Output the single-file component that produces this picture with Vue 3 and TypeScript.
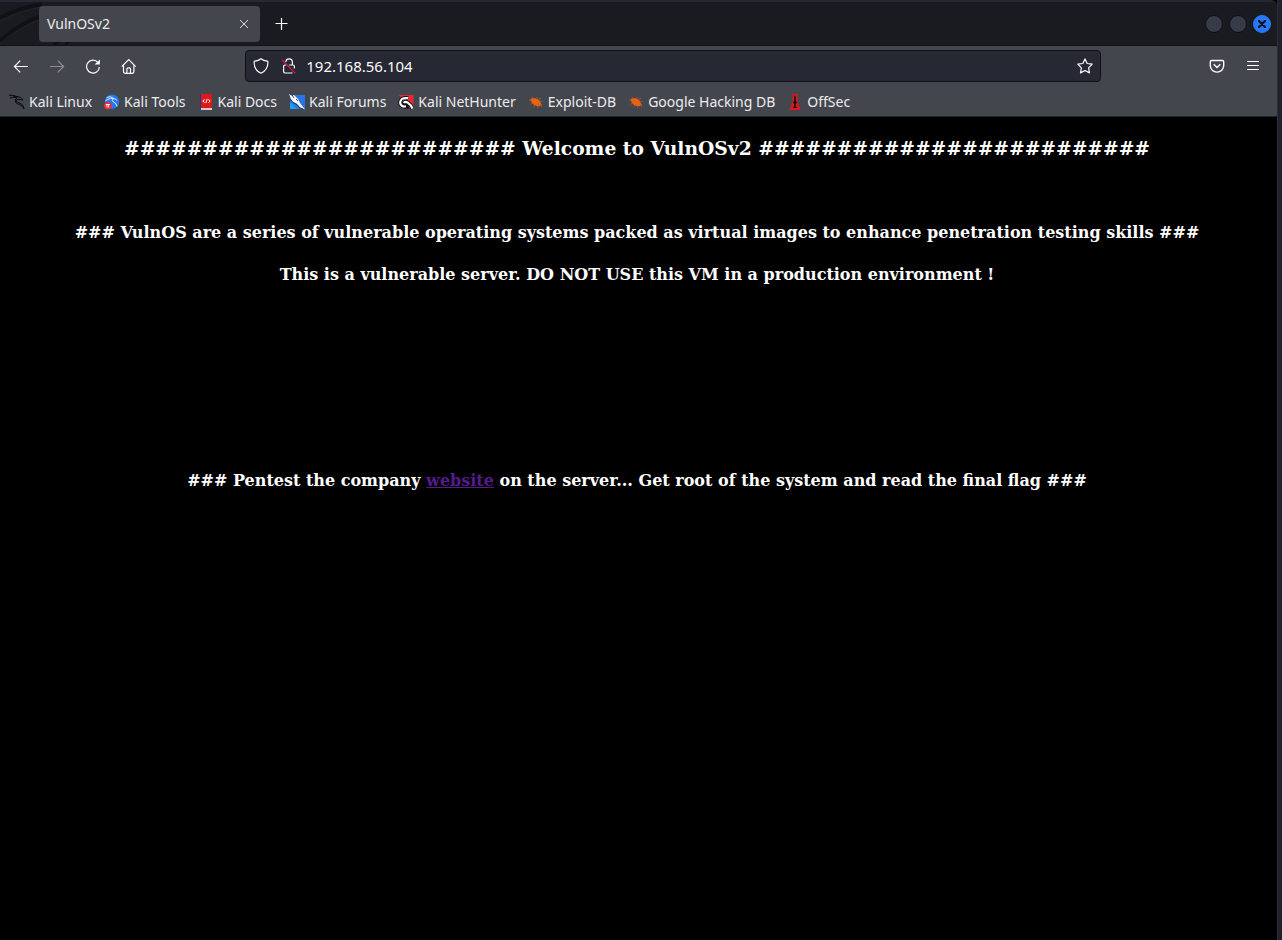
<script setup lang="ts">
import { ref } from 'vue'

interface Bookmark {
  label: string
  icon: 'dragon' | 'tools' | 'docs' | 'forums' | 'hunter' | 'bug' | 'offsec'
}

const address = ref('192.168.56.104')

const bookmarks: Bookmark[] = [
  { label: 'Kali Linux', icon: 'dragon' },
  { label: 'Kali Tools', icon: 'tools' },
  { label: 'Kali Docs', icon: 'docs' },
  { label: 'Kali Forums', icon: 'forums' },
  { label: 'Kali NetHunter', icon: 'hunter' },
  { label: 'Exploit-DB', icon: 'bug' },
  { label: 'Google Hacking DB', icon: 'bug' },
  { label: 'OffSec', icon: 'offsec' },
]

const hashes = '#'.repeat(25)
</script>

<template>
  <div class="desktop">
    <div class="window">
      <header class="titlebar">
        <svg class="wallpaper" width="76" height="43" viewBox="0 0 76 43" aria-hidden="true">
          <path d="M0 16Q18 6 42 2M0 39Q18 22 44 13M54 43Q58 40 62 36M66 43L70 36" fill="none" stroke="#101115" stroke-width="4" />
          <path d="M0 19Q18 9 42 5M0 42Q18 25 44 16" fill="none" stroke="#22242a" stroke-width="1" />
        </svg>
        <div class="tab">
          <span class="tab-title">VulnOSv2</span>
          <button class="tab-close" aria-label="Close tab">
            <svg width="10" height="10" viewBox="0 0 10 10"><path d="M1 1L9 9M9 1L1 9" stroke="#dcdcde" stroke-width="1" /></svg>
          </button>
        </div>
        <button class="new-tab" aria-label="New tab">
          <svg width="14" height="14" viewBox="0 0 14 14"><path d="M6.5 1V13M.5 6.5H12.5" stroke="#fbfbfe" stroke-width="1.2" /></svg>
        </button>
        <div class="controls">
          <button class="control" aria-label="Minimize"></button>
          <button class="control" aria-label="Maximize"></button>
          <button class="control close" aria-label="Close window">
            <svg width="8" height="8" viewBox="0 0 8 8"><path d="M1 1L7 7M7 1L1 7" stroke="#101218" stroke-width="2.2" stroke-linecap="round" /></svg>
          </button>
        </div>
      </header>

      <nav class="toolbar">
        <div class="nav-buttons">
          <button class="tool" aria-label="Back">
            <svg width="16" height="16" viewBox="0 0 16 16"><path d="M15 8.5H1.6M7.2 2.7L1.4 8.5L7.2 14.3" /></svg>
          </button>
          <button class="tool disabled" aria-label="Forward" disabled>
            <svg width="16" height="16" viewBox="0 0 16 16"><path d="M1 8.5H14.4M8.8 2.7L14.6 8.5L8.8 14.3" /></svg>
          </button>
          <button class="tool" aria-label="Reload">
            <svg width="16" height="16" viewBox="0 0 16 16"><path d="M13 4.6A6.4 6.4 0 1 0 14.4 9" /><path d="M14.9 1.4V6.6H9.6Z" fill="#fbfbfe" stroke="none" /></svg>
          </button>
          <button class="tool" aria-label="Home">
            <svg width="16" height="16" viewBox="0 0 16 16"><path d="M.7 8.6L7.7 1.6L14.7 8.6M2.5 7.3V13.6Q2.5 15.3 4.2 15.3H11.2Q12.9 15.3 12.9 13.6V7.3M5.9 15.2V11Q5.9 9.8 7.1 9.8H8.3Q9.5 9.8 9.5 11V15.2" /></svg>
          </button>
        </div>
        <div class="urlbar">
          <button class="url-icon" aria-label="Tracking protection">
            <svg width="16" height="16" viewBox="0 0 16 16"><path d="M8 .8Q10.5 2.7 14.2 3.2Q15 3.4 14.9 4.2Q14.9 12 8 15.2Q1.1 12 1.1 4.2Q1 3.4 1.8 3.2Q5.5 2.7 8 .8Z" /></svg>
          </button>
          <button class="url-icon" aria-label="Connection not secure">
            <svg width="16" height="16" viewBox="0 0 16 16"><path d="M4.7 3.8Q5.3 .9 8 .9Q11.4 .9 11.4 4.2V7M8.2 7H12Q13.4 7 13.4 8.4V10.5M11.5 15H4Q2.6 15 2.6 13.6V8.4Q2.6 7 4 7H5" /><path d="M1 2L14.4 15.4" class="slash" /></svg>
          </button>
          <input v-model="address" class="address" type="text" aria-label="Address" spellcheck="false" />
          <button class="url-icon" aria-label="Bookmark this page">
            <svg width="16" height="16" viewBox="0 0 16 16"><path d="M8 .9L10.2 5.5L15.2 6.2L11.6 9.8L12.5 14.9L8 12.5L3.5 14.9L4.4 9.8L.8 6.2L5.8 5.5Z" stroke-linejoin="round" /></svg>
          </button>
        </div>
        <div class="menu-buttons">
          <button class="tool" aria-label="Save to Pocket">
            <svg width="16" height="16" viewBox="0 0 16 16"><path d="M2.6 2.5H13.4Q14.7 2.5 14.7 3.8V7.6A6.7 6.5 0 0 1 1.3 7.6V3.8Q1.3 2.5 2.6 2.5ZM4.7 6.3L8 9.5L11.3 6.3" stroke-width="1.4" /></svg>
          </button>
          <button class="tool" aria-label="Application menu">
            <svg width="16" height="16" viewBox="0 0 16 16"><path d="M2 3.5H14M2 7.5H14M2 11.5H14" /></svg>
          </button>
        </div>
      </nav>

      <nav class="bookmarks" aria-label="Bookmarks">
        <a v-for="item in bookmarks" :key="item.label" class="bookmark" href="#">
          <svg width="16" height="16" viewBox="0 0 16 16" aria-hidden="true">
            <g v-if="item.icon === 'dragon'" fill="none" stroke="#050506" stroke-linecap="round">
              <path d="M.5 1.2Q4 .7 7.5 2.6M1.2 4Q4 2.6 7.5 3.4" stroke-width=".9" />
              <path d="M5 2.3Q11.5 2.2 13 4.8L14 6L11 5.4Q7.2 4.6 7.4 7Q8 8.7 11 9.2Q14.5 10.4 15.2 15Q13.4 11.5 10.5 10.7Q6.7 9.8 6.2 7Q5.8 5 8 4.1" stroke-width=".9" />
            </g>
            <g v-else-if="item.icon === 'tools'">
              <circle cx="8" cy="7.7" r="7.2" fill="#2677f2" />
              <path d="M2.6 3.6Q6.5 1.5 9.5 4.2M1.6 6.6Q6.4 2.9 11 4.9L13.2 6.4M9.5 5Q6.6 6 9.4 8Q12.6 9 13 12.5" fill="none" stroke="#dceaff" stroke-width="1" />
              <circle cx="3.8" cy="11.8" r="3.8" fill="#e72d36" />
              <path d="M1.8 10.5H5.8M3 10.5V13.5M4.7 10.5V13.5" fill="none" stroke="#fff" stroke-width=".9" />
            </g>
            <g v-else-if="item.icon === 'docs'">
              <path d="M2 0H4V15H2Z" fill="#143e8d" />
              <path d="M3 0H14V14H3Z" fill="#de171d" />
              <path d="M3 14H14V16H3Z" fill="#d5cbd0" />
              <path d="M6.6 5.4L4.8 7L6.6 8.6M10.4 5.4L12.2 7L10.4 8.6M9.2 4.9L7.8 9.1" fill="none" stroke="#fff" stroke-width="1" />
            </g>
            <g v-else-if="item.icon === 'forums'">
              <path d="M1 1H16V15H1Z" fill="#2875e8" />
              <path d="M1 8L8 15H1Z" fill="#1aa0ee" />
              <path d="M0 0L3 2L5 1L9 5L11 9L16 15.5L11 13.5L8 10L4 8L2 5Z" fill="#f6f8fa" />
              <path d="M1 5L4 8.4L8 10.5L11 14L14 15" fill="none" stroke="#162b42" stroke-width=".9" />
              <path d="M3 1L5 4M7 5L9 7" fill="none" stroke="#162b42" stroke-width=".8" />
            </g>
            <g v-else-if="item.icon === 'hunter'">
              <path d="M1 1H15.5V13.5L11 15L6 8Z" fill="#e72936" />
              <path d="M1 10L5 14L12 15L8 11Z" fill="#17181d" />
              <path d="M10 4.2Q2.2 3.2 2.2 8.8Q2.6 13 8 12.4L6.3 9.4Q7 6.8 9.8 8.7Q13 11 14.5 14.5" fill="none" stroke="#111216" stroke-width="4" />
              <path d="M10 4.2Q2.2 3.2 2.2 8.8Q2.6 13 8 12.4M6 9.2Q7 6.8 9.8 8.7Q13 11 14.5 14.5" fill="none" stroke="#fafafa" stroke-width="2.2" />
            </g>
            <g v-else-if="item.icon === 'bug'">
              <path d="M2.4 5L5.5 4Q11 4.4 12.4 8.2L14 11L11 12.2Q5.5 12 3.7 8.5Z" fill="#e76316" />
              <path d="M1 6L4 7M4 3L6 5M9 3L9.5 6M13 4L10.5 6M14.5 7L12 8M2.5 10L6 9M5.5 13L8 10M9.5 14L10 11M14 13L12 10" fill="none" stroke="#bc5524" stroke-width=".8" />
            </g>
            <g v-else>
              <path d="M5.5 0H10.5V8.5L14 16H2L5.5 8.5Z" fill="#dd1720" />
              <path d="M8 1L9 3.5L8.7 6L10 9L8.8 9.5V12.5L10.3 14H5.7L7.2 12.5V9.5L6 9L7.3 6L7 3.5Z" fill="#230b0d" />
            </g>
          </svg>
          <span>{{ item.label }}</span>
        </a>
      </nav>

      <main class="page">
        <h3>{{ hashes }} Welcome to VulnOSv2 {{ hashes }}</h3>
        <h4 class="intro">### VulnOS are a series of vulnerable operating systems packed as virtual images to enhance penetration testing skills ###</h4>
        <h4>This is a vulnerable server. DO NOT USE this VM in a production environment !</h4>
        <h4 class="task">### Pentest the company <a href="#">website</a> on the server... Get root of the system and read the final flag ###</h4>
      </main>
    </div>
  </div>
</template>

<style>
body {
  margin: 0;
  background: #000;
}
</style>

<style scoped>
.desktop {
  box-sizing: border-box;
  min-height: 100vh;
  display: flex;
  padding-right: 4px;
  background: #1d222d;
}

.window {
  flex: 1;
  min-width: 0;
  display: flex;
  flex-direction: column;
  border-right: 1px solid #2b2e37;
  background: #000;
  color: #ececee;
  font-family: "Noto Sans", sans-serif;
  font-size: 14px;
}

button {
  display: flex;
  align-items: center;
  justify-content: center;
  padding: 0;
  border: 0;
  background: none;
}

svg {
  display: block;
  flex: none;
}

.titlebar {
  box-sizing: border-box;
  position: relative;
  height: 46px;
  display: flex;
  align-items: center;
  gap: 8px;
  padding: 0 6px 0 39px;
  border-top: 2px solid #262834;
  border-bottom: 1px solid #121318;
  border-top-right-radius: 6px;
  background: #1a1b20;
}

.wallpaper {
  position: absolute;
  left: 0;
  top: 0;
}

.tab {
  position: relative;
  box-sizing: border-box;
  width: 221px;
  height: 36px;
  display: flex;
  align-items: center;
  justify-content: space-between;
  padding: 0 8px;
  border-radius: 4px;
  background: #44464d;
}

.tab-close {
  width: 16px;
  height: 20px;
}

.new-tab {
  width: 28px;
  height: 28px;
}

.controls {
  display: flex;
  gap: 6px;
  margin-left: auto;
}

.control {
  box-sizing: border-box;
  width: 18px;
  height: 18px;
  border: 1px solid #0d0f14;
  border-radius: 50%;
  background: #363b48;
}

.control.close {
  border-color: #2777ff;
  background: #2777ff;
}

.toolbar {
  height: 40px;
  display: flex;
  align-items: center;
  background: #44464d;
}

.nav-buttons,
.menu-buttons {
  display: flex;
  flex: 1 1 auto;
  gap: 4px;
}

.nav-buttons {
  padding-left: 5px;
}

.menu-buttons {
  justify-content: flex-end;
  padding-right: 8px;
}

.tool {
  width: 32px;
  height: 32px;
}

.tool svg,
.url-icon svg {
  fill: none;
  stroke: #fbfbfe;
  stroke-width: 1.2;
}

.tool.disabled {
  opacity: 0.4;
}

.urlbar {
  box-sizing: border-box;
  width: 67%;
  height: 32px;
  display: flex;
  align-items: center;
  padding: 0 1px;
  border: 1px solid #101116;
  border-radius: 4px;
  background: #262833;
}

.url-icon {
  width: 28px;
  height: 28px;
}

.url-icon .slash {
  stroke: #e2144b;
}

.address {
  flex: 1;
  min-width: 0;
  padding: 0 3px;
  border: 0;
  outline: 0;
  background: none;
  color: #fbfbfe;
  font: inherit;
  font-size: 15px;
}

.bookmarks {
  box-sizing: border-box;
  height: 31px;
  display: flex;
  align-items: center;
  gap: 12px;
  padding: 2px 9px 0;
  border-bottom: 1px solid #202127;
  background: #44464d;
}

.bookmark {
  display: flex;
  align-items: center;
  gap: 4px;
  color: inherit;
  line-height: 20px;
  text-decoration: none;
  white-space: nowrap;
}

.page {
  flex: 1;
  padding: 0 3px 22px 0;
  color: #fff;
  font-family: "DejaVu Serif", serif;
  font-size: 16px;
  text-align: center;
}

.page h3 {
  margin: 20px 0 0;
  line-height: 22px;
}

.page h4 {
  margin: 22px 0 0;
  font-size: 16px;
  line-height: 20px;
}

.page h4.intro {
  margin-top: 64px;
}

.page h4.task {
  margin-top: 186px;
}

.page a {
  color: #551a8b;
}
</style>
